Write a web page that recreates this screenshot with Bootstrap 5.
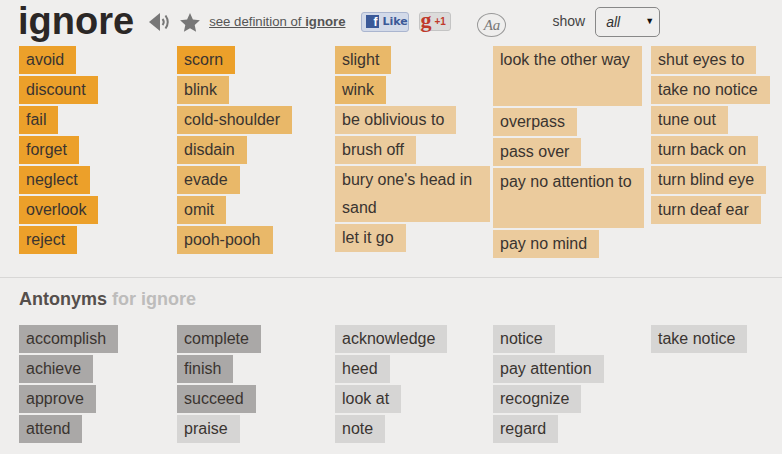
<!DOCTYPE html>
<html lang="en">
<head>
<meta charset="utf-8">
<title>ignore</title>
<link href="https://cdn.jsdelivr.net/npm/bootstrap@5.3.0/dist/css/bootstrap.min.css" rel="stylesheet">
<style>
html,body{background:#efeeed;}
body{font-family:"Liberation Sans",Arial,sans-serif;color:#333;height:454px;overflow:hidden;}
.hdr{height:46px;padding-left:18px;}
.word{font-size:38px;font-weight:700;line-height:46px;color:#2b2726;margin:-4px 15px 0 0;}
.spk{margin:-2px 9px 0 0;}
.str{margin-top:-2px;}
.defn{font-size:13.2px;color:#555;text-decoration:underline;margin:-3px 16px 0 9px;}
.defn:hover{color:#555;}
.fb{width:48px;height:20px;background:#d3dae9;border:1px solid #aab5cf;border-radius:3px;font:700 11px/18px "DejaVu Sans",sans-serif;color:#3b5998;margin:-3px 10px 0 0;}
.fbf{width:13px;height:13px;background:#3b5998;color:#fff;font:700 12px/14px "Liberation Sans",sans-serif;text-align:right;padding-right:2px;margin:0 3px 0 4px;}
.gp{width:32px;height:19px;background:#dcdbda;border:1px solid #c4c4c4;border-radius:3px;color:#c0392b;font-weight:700;margin:-3px 26px 0 0;line-height:16px;}
.gg{font:700 22px/14px "Liberation Serif",serif;margin:-3px 3px 0 0;}
.gn{font-size:10px;}
.aa{width:29px;height:24px;border:1px solid #999;border-radius:50%;font:italic 15px/22px "Liberation Serif",serif;color:#777;text-align:center;margin:3px 46px 0 0;}
.show{font-size:14px;color:#444;margin:-4px 10px 0 0;}
.pick{width:65px;height:30px;border:1px solid #888;border-radius:5px;padding:0 5px 0 10px;font-style:italic;font-size:14px;color:#333;margin-top:-2px;}
.tri{font-style:normal;font-size:9px;color:#111;}
.cols{padding-left:19px;}
.colm{width:158px;flex:0 0 158px;}
.item,.item:hover{display:block;width:fit-content;height:28px;line-height:28px;font-size:16px;padding:0 12px 0 7px;margin-bottom:2px;color:#3a3430;white-space:nowrap;text-decoration:none;}
.o1{background:#eca02a;}
.o2{background:#e9b869;}
.o3{background:#ebcb9d;}
.g1{background:#aaa8a7;}
.g2{background:#d6d5d4;}
.tall{height:60px;}
.tall2{height:56px;width:155px;white-space:normal;padding-right:5px;}
.syn{height:231px;}
.rule{border-top:1px solid #d8d7d6;}
.ant{font-size:18px;font-weight:700;color:#554f4c;padding-left:19px;line-height:21px;margin:11px 0 15px;}
.ant span{color:#bdbcbb;}
</style>
</head>
<body>
<div class="hdr d-flex align-items-center">
  <h1 class="word">ignore</h1>
  <svg class="spk" width="22" height="20" viewBox="0 0 22 20"><path d="M0 10l11-9v18z" fill="#777"/><path d="M13.500 7q2.500 3 0 6M16.500 3.500q4.500 6.500 0 13" fill="none" stroke="#777" stroke-width="2"/></svg>
  <svg class="str" width="20" height="19" viewBox="0 0 20 19"><path d="M10 0l2.900 6.400 7 .8-5.200 4.700 1.400 6.900L10 15.300 3.900 18.800l1.400-6.900L.1 7.200l7-.8z" fill="#777"/></svg>
  <a class="defn" href="#">see definition of <b>ignore</b></a>
  <div class="fb d-flex align-items-center"><span class="fbf">f</span>Like</div>
  <div class="gp d-flex align-items-center"><span class="gg">g</span><span class="gn">+1</span></div>
  <div class="aa">Aa</div>
  <span class="show">show</span>
  <div class="pick d-flex align-items-center justify-content-between"><span>all</span><span class="tri">▼</span></div>
</div>
<div class="cols d-flex syn">
  <div class="colm">
    <a class="item o1">avoid</a><a class="item o1">discount</a><a class="item o1">fail</a><a class="item o1">forget</a><a class="item o1">neglect</a><a class="item o1">overlook</a><a class="item o1">reject</a>
  </div>
  <div class="colm">
    <a class="item o1">scorn</a><a class="item o2">blink</a><a class="item o2">cold-shoulder</a><a class="item o2">disdain</a><a class="item o2">evade</a><a class="item o2">omit</a><a class="item o2">pooh-pooh</a>
  </div>
  <div class="colm">
    <a class="item o2">slight</a><a class="item o2">wink</a><a class="item o3">be oblivious to</a><a class="item o3">brush off</a><a class="item o3 tall2">bury one's head in sand</a><a class="item o3">let it go</a>
  </div>
  <div class="colm">
    <a class="item o3 tall">look the other way</a><a class="item o3">overpass</a><a class="item o3">pass over</a><a class="item o3 tall">pay no attention to</a><a class="item o3">pay no mind</a>
  </div>
  <div class="colm">
    <a class="item o3">shut eyes to</a><a class="item o3">take no notice</a><a class="item o3">tune out</a><a class="item o3">turn back on</a><a class="item o3">turn blind eye</a><a class="item o3">turn deaf ear</a>
  </div>
</div>
<div class="rule"></div>
<div class="ant">Antonyms <span>for ignore</span></div>
<div class="cols d-flex">
  <div class="colm">
    <a class="item g1">accomplish</a><a class="item g1">achieve</a><a class="item g1">approve</a><a class="item g1">attend</a>
  </div>
  <div class="colm">
    <a class="item g1">complete</a><a class="item g1">finish</a><a class="item g1">succeed</a><a class="item g2">praise</a>
  </div>
  <div class="colm">
    <a class="item g2">acknowledge</a><a class="item g2">heed</a><a class="item g2">look at</a><a class="item g2">note</a>
  </div>
  <div class="colm">
    <a class="item g2">notice</a><a class="item g2">pay attention</a><a class="item g2">recognize</a><a class="item g2">regard</a>
  </div>
  <div class="colm">
    <a class="item g2">take notice</a>
  </div>
</div>
<script src="https://cdn.jsdelivr.net/npm/bootstrap@5.3.0/dist/js/bootstrap.bundle.min.js"></script>
</body>
</html>
